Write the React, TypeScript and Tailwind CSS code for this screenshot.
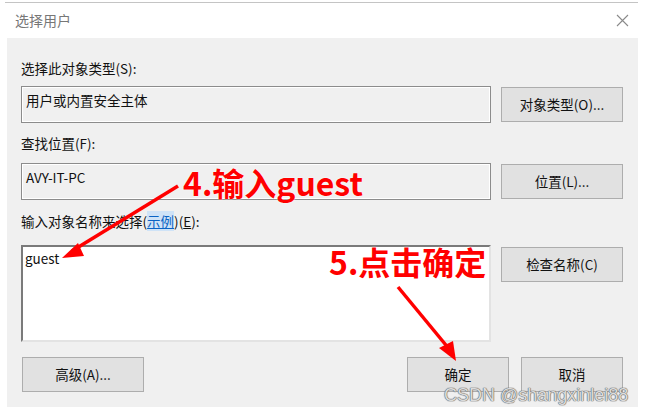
import React from "react";

const ui = { fontFamily: '"Noto Sans CJK SC", "Noto Sans", sans-serif' };

function Btn({ label, w }: { label: string; w: string }) {
  return (
    <div
      className={`${w} h-[35px] flex items-center justify-center bg-[#e1e1e1] border border-[#adadad] text-[13.5px] text-[#111]`}
    >
      {label}
    </div>
  );
}

function Box({ text }: { text: string }) {
  return (
    <div className="flex-1 h-[37px] border border-[#8c8c8c] bg-[#f0f0f0] shadow-[inset_1px_1px_0_#ffffff,inset_-1px_-1px_0_#ffffff] flex items-start pt-[3px] pl-[4px] text-[13.5px] text-[#111]">
      {text}
    </div>
  );
}

export default function App() {
  return (
    <div className="relative w-[645px] h-[415px] bg-white overflow-hidden" style={ui}>
      <div className="pt-[2px] pl-[5px] pr-[7px]">
        <div className="h-[1px] bg-[#c4c4c4]" />
      </div>
      <div className="h-[35px] flex items-center justify-between pl-[15px] pr-[16px]">
        <span className="text-[14px] text-[#777]">选择用户</span>
        <svg width="13" height="13" viewBox="0 0 13 13">
          <path d="M1 1 L12 12 M12 1 L1 12" stroke="#8a8a8a" strokeWidth="1.1" />
        </svg>
      </div>
      <div className="ml-[7px] mr-[7px] h-[369px] bg-[#f0f0f0] pl-[14px] pr-[15px] pt-[20px] flex flex-col">
        <div className="h-[20px] leading-[20px] text-[13.5px] text-[#111]">选择此对象类型(S):</div>
        <div className="mt-[8px] flex items-center gap-[10px]">
          <Box text="用户或内置安全主体" />
          <Btn label="对象类型(O)..." w="w-[122px]" />
        </div>
        <div className="mt-[10px] h-[20px] leading-[20px] text-[13.5px] text-[#111]">查找位置(F):</div>
        <div className="mt-[10px] flex items-center gap-[10px]">
          <Box text="AVY-IT-PC" />
          <Btn label="位置(L)..." w="w-[122px]" />
        </div>
        <div className="mt-[11px] h-[20px] leading-[20px] text-[13.5px] text-[#111]">
          输入对象名称来选择(
          <span className="text-[#0b63c4] underline bg-[#cfe3f7]">示例</span>
          )(<span className="underline">E</span>):
        </div>
        <div className="mt-[14px] flex items-start gap-[10px]">
          <div className="flex-1 h-[97px] bg-white border-2 border-t-[#7a7a7a] border-l-[#7a7a7a] border-r-[#e3e3e3] border-b-[#e3e3e3] pl-[2px] pt-[2px] text-[13.5px] text-[#111] leading-[18px]">
            guest
          </div>
          <div className="mt-[2px]">
            <Btn label="检查名称(C)" w="w-[122px]" />
          </div>
        </div>
        <div className="mt-[15px] flex items-center">
          <div className="ml-[1px]">
            <Btn label="高级(A)..." w="w-[122px]" />
          </div>
          <div className="ml-auto flex gap-[12px]">
            <Btn label="确定" w="w-[102px]" />
            <Btn label="取消" w="w-[102px]" />
          </div>
        </div>
      </div>

      {/* annotations */}
      <svg className="absolute inset-0 pointer-events-none" width="645" height="415" viewBox="0 0 645 415">
        <line x1="178" y1="186" x2="72" y2="251" stroke="#ff0000" strokeWidth="3.5" />
        <polygon points="62,258 78,243 84,256" fill="#ff0000" />
        <line x1="398" y1="287" x2="450" y2="350" stroke="#ff0000" strokeWidth="3.5" />
        <polygon points="456,361 439,348 453,341" fill="#ff0000" />
      </svg>
      <div
        className="absolute left-[183px] top-[166px] text-[32px] font-bold text-[#ff0000] leading-[32px] whitespace-nowrap"
        style={{ textShadow: "0 0 2px #fff" }}
      >
        4.输入guest
      </div>
      <div
        className="absolute left-[329px] top-[245px] text-[32px] font-bold text-[#ff0000] leading-[32px] whitespace-nowrap"
        style={{ textShadow: "0 0 2px #fff" }}
      >
        5.点击确定
      </div>
      <div
        className="absolute left-[444px] top-[384px] text-[18px] leading-[22px] text-[#dcdcdc] whitespace-nowrap"
        style={{
          fontFamily: '"Liberation Sans", Arial, sans-serif',
          textShadow: "0 0 1px #666, 0 0 1px #666, 0 0 1px #666",
        }}
      >
        CSDN @shangxinlei88
      </div>
    </div>
  );
}
